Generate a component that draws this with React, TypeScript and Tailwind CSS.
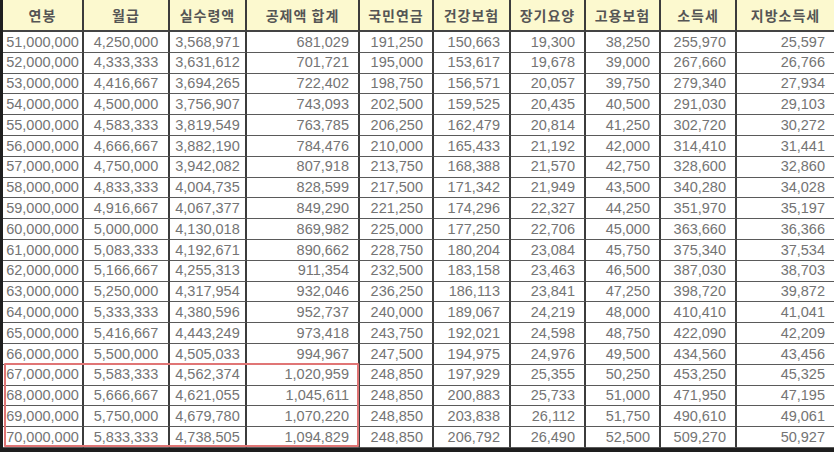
const HEADERS = ["연봉", "월급", "실수령액", "공제액 합계", "국민연금", "건강보험", "장기요양", "고용보험", "소득세", "지방소득세"];

const ROWS: string[][] = [
  ["51,000,000", "4,250,000", "3,568,971", "681,029", "191,250", "150,663", "19,300", "38,250", "255,970", "25,597"],
  ["52,000,000", "4,333,333", "3,631,612", "701,721", "195,000", "153,617", "19,678", "39,000", "267,660", "26,766"],
  ["53,000,000", "4,416,667", "3,694,265", "722,402", "198,750", "156,571", "20,057", "39,750", "279,340", "27,934"],
  ["54,000,000", "4,500,000", "3,756,907", "743,093", "202,500", "159,525", "20,435", "40,500", "291,030", "29,103"],
  ["55,000,000", "4,583,333", "3,819,549", "763,785", "206,250", "162,479", "20,814", "41,250", "302,720", "30,272"],
  ["56,000,000", "4,666,667", "3,882,190", "784,476", "210,000", "165,433", "21,192", "42,000", "314,410", "31,441"],
  ["57,000,000", "4,750,000", "3,942,082", "807,918", "213,750", "168,388", "21,570", "42,750", "328,600", "32,860"],
  ["58,000,000", "4,833,333", "4,004,735", "828,599", "217,500", "171,342", "21,949", "43,500", "340,280", "34,028"],
  ["59,000,000", "4,916,667", "4,067,377", "849,290", "221,250", "174,296", "22,327", "44,250", "351,970", "35,197"],
  ["60,000,000", "5,000,000", "4,130,018", "869,982", "225,000", "177,250", "22,706", "45,000", "363,660", "36,366"],
  ["61,000,000", "5,083,333", "4,192,671", "890,662", "228,750", "180,204", "23,084", "45,750", "375,340", "37,534"],
  ["62,000,000", "5,166,667", "4,255,313", "911,354", "232,500", "183,158", "23,463", "46,500", "387,030", "38,703"],
  ["63,000,000", "5,250,000", "4,317,954", "932,046", "236,250", "186,113", "23,841", "47,250", "398,720", "39,872"],
  ["64,000,000", "5,333,333", "4,380,596", "952,737", "240,000", "189,067", "24,219", "48,000", "410,410", "41,041"],
  ["65,000,000", "5,416,667", "4,443,249", "973,418", "243,750", "192,021", "24,598", "48,750", "422,090", "42,209"],
  ["66,000,000", "5,500,000", "4,505,033", "994,967", "247,500", "194,975", "24,976", "49,500", "434,560", "43,456"],
  ["67,000,000", "5,583,333", "4,562,374", "1,020,959", "248,850", "197,929", "25,355", "50,250", "453,250", "45,325"],
  ["68,000,000", "5,666,667", "4,621,055", "1,045,611", "248,850", "200,883", "25,733", "51,000", "471,950", "47,195"],
  ["69,000,000", "5,750,000", "4,679,780", "1,070,220", "248,850", "203,838", "26,112", "51,750", "490,610", "49,061"],
  ["70,000,000", "5,833,333", "4,738,505", "1,094,829", "248,850", "206,792", "26,490", "52,500", "509,270", "50,927"],
];

// 앞의 세 칸은 가운데, 나머지는 오른쪽 정렬
const centered = (i: number) => i < 3;

export default function App() {
  return (
    <div className="w-[834px] h-[452px] bg-[#1e1e1e] overflow-hidden">
      <div className="relative ml-[3px] w-[831px] h-[448px] bg-white">
        <div className="grid grid-cols-[81px_86px_77px_113px_74px_77px_75px_75px_76px_97px] grid-rows-[32px_repeat(20,20.8px)] font-['Liberation_Sans',Arial,sans-serif]">
          {HEADERS.map((h, i) => (
            <div
              key={h}
              className={
                "flex items-center justify-center border-b-2 border-b-[#444] bg-[#fcf9cf] text-[14px] font-bold text-[#555] font-['Noto_Sans_CJK_KR','Noto_Sans',sans-serif] tracking-[1px] " +
                (i < 9 ? "border-r-2 border-r-[#3c3c3c]" : "")
              }
            >
              {h}
            </div>
          ))}
          {ROWS.map((r) =>
            r.map((v, i) => (
              <div
                key={r[0] + i}
                className={
                  "flex items-center border-b border-b-[#5a5a5a] text-[14.5px] leading-none text-[#747474] " +
                  (i < 9 ? "border-r-2 border-r-[#3c3c3c] " : "") +
                  (centered(i) ? "justify-center" : "justify-end pr-[9px]")
                }
              >
                {v}
              </div>
            ))
          )}
        </div>
        <div className="absolute left-[1px] top-[363px] w-[355px] h-[84px] border-2 border-[#e07575] rounded-[1px] pointer-events-none" />
      </div>
    </div>
  );
}
